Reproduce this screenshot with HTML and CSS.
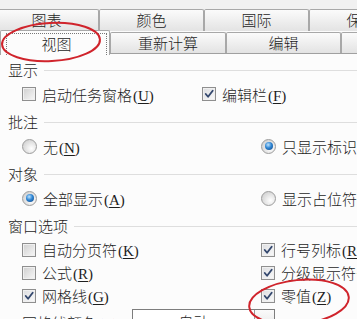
FILE: index.html
```html
<!DOCTYPE html>
<html lang="zh-CN">
<head>
<meta charset="utf-8">
<link rel="stylesheet" href="styles.css">
</head>
<body>
<div class="top"></div>
<div class="tabrow row1">
  <div class="tab">图表</div>
  <div class="tab">颜色</div>
  <div class="tab">国际</div>
  <div class="tab">保护</div>
</div>
<div class="tabrow row2">
  <div class="tab sel"><span class="focus">视图</span></div>
  <div class="tab w116">重新计算</div>
  <div class="tab w115">编辑</div>
  <div class="tab w115">错误检查</div>
</div>
<div class="panel">
  <div class="group">
    <div class="legend"><span>显示</span><i class="rule"></i></div>
    <div class="row g1">
      <label class="opt"><i class="cb"></i><span>启动任务窗格<span class="mn">(<u>U</u>)</span></span></label>
      <label class="opt"><i class="cb on"><svg viewBox="0 0 13 13"><path d="M3 6.5 L5.5 9.5 L10.5 3"/></svg></i><span>编辑栏<span class="mn">(<u>F</u>)</span></span></label>
    </div>
  </div>
  <div class="group">
    <div class="legend"><span>批注</span><i class="rule"></i></div>
    <div class="row g2">
      <label class="opt"><i class="rb"></i><span>无<span class="mn">(<u>N</u>)</span></span></label>
      <label class="opt"><i class="rb on"></i><span>只显示标识符<span class="mn">(<u>I</u>)</span></span></label>
    </div>
  </div>
  <div class="group">
    <div class="legend"><span>对象</span><i class="rule"></i></div>
    <div class="row g2">
      <label class="opt"><i class="rb on"></i><span>全部显示<span class="mn">(<u>A</u>)</span></span></label>
      <label class="opt"><i class="rb"></i><span>显示占位符<span class="mn">(<u>P</u>)</span></span></label>
    </div>
  </div>
  <div class="group">
    <div class="legend"><span>窗口选项</span><i class="rule"></i></div>
    <div class="row g2 tight">
      <label class="opt"><i class="cb"></i><span>自动分页符<span class="mn">(<u>K</u>)</span></span></label>
      <label class="opt"><i class="cb on"><svg viewBox="0 0 13 13"><path d="M3 6.5 L5.5 9.5 L10.5 3"/></svg></i><span>行号列标<span class="mn">(<u>R</u>)</span></span></label>
    </div>
    <div class="row g2 tight">
      <label class="opt"><i class="cb"></i><span>公式<span class="mn">(<u>R</u>)</span></span></label>
      <label class="opt"><i class="cb on"><svg viewBox="0 0 13 13"><path d="M3 6.5 L5.5 9.5 L10.5 3"/></svg></i><span>分级显示符号<span class="mn">(<u>O</u>)</span></span></label>
    </div>
    <div class="row g2 tight">
      <label class="opt"><i class="cb on"><svg viewBox="0 0 13 13"><path d="M3 6.5 L5.5 9.5 L10.5 3"/></svg></i><span>网格线<span class="mn">(<u>G</u>)</span></span></label>
      <label class="opt"><i class="cb on"><svg viewBox="0 0 13 13"><path d="M3 6.5 L5.5 9.5 L10.5 3"/></svg></i><span>零值<span class="mn">(<u>Z</u>)</span></span></label>
    </div>
    <div class="row colorrow">
      <span class="clabel">网格线颜色<span class="mn">(<u>C</u>):</span></span>
      <div class="dd"><span class="ddtext">自动</span><span class="ddbtn"></span></div>
    </div>
  </div>
</div>
<svg class="marks" viewBox="0 0 357 319" width="357" height="319">
  <ellipse cx="51" cy="42" rx="49" ry="19" transform="rotate(-3 51 42)"/>
  <ellipse cx="299" cy="302" rx="50" ry="22" transform="rotate(-6 299 302)"/>
</svg>
</body>
</html>
```
FILE: styles.css
```css
html, body {
  margin: 0;
  padding: 0;
}
body {
  width: 357px;
  height: 319px;
  overflow: hidden;
  position: relative;
  background: #fcfcfc;
  font-family: "Noto Sans CJK SC", "Liberation Sans", sans-serif;
  font-size: 15px;
  font-weight: 300;
  color: #1e1e1e;
}
.mn {
  font-family: "Liberation Serif", "Noto Sans CJK SC", serif;
  font-weight: 400;
  margin-left: 1px;
}
.top {
  height: 9px;
  background: #f1f1f1;
}
.tabrow {
  display: flex;
  height: 22px;
  position: relative;
  white-space: nowrap;
}
.row1 {
  margin-left: -6px;
}
.tab {
  flex: none;
  box-sizing: border-box;
  width: 105px;
  height: 22px;
  border: 1px solid #a8a8a8;
  border-bottom: none;
  border-radius: 2px 2px 0 0;
  background: linear-gradient(#fbfbfb, #e3e3e3);
  text-align: center;
  line-height: 20px;
  overflow: hidden;
}
.row2 .tab {
  margin-top: 1px;
  height: 21px;
  line-height: 20px;
}
.row2 .tab.w116 { width: 116px; }
.row2 .tab.w115 { width: 115px; }
.row2 .tab.sel {
  width: 110px;
  height: 25px;
  margin-top: -1px;
  background: #fcfcfc;
  position: relative;
  z-index: 2;
  display: flex;
  padding: 2px 2px 0 5px;
}
.focus {
  flex: 1;
  border: 1px dotted #777;
  border-bottom: none;
  line-height: 19px;
  text-align: center;
}
.panel {
  border-top: 1px solid #a0a0a0;
  padding-top: 4px;
}
.group {
  margin-bottom: 4px;
}
.legend {
  display: flex;
  align-items: center;
  height: 22px;
  padding-left: 8px;
  margin-bottom: 2px;
}
.rule {
  flex: 1;
  height: 1px;
  background: #dedede;
  margin-left: 6px;
  margin-top: 3px;
}
.row {
  display: grid;
  height: 24px;
  padding-left: 22px;
  align-items: center;
  white-space: nowrap;
}
.row.g1 { grid-template-columns: 180px 1fr; }
.row.g2 { grid-template-columns: 239px 1fr; }
.row.tight { height: 23px; }
.opt {
  display: flex;
  align-items: center;
  gap: 6px;
}
u {
  text-underline-offset: 2px;
  text-decoration-thickness: 1px;
}
.cb {
  flex: none;
  box-sizing: border-box;
  width: 14px;
  height: 14px;
  border: 1px solid #8f8f8f;
  background: linear-gradient(135deg, #cfcfcf, #f8f8f8);
  box-shadow: inset 0 0 0 1px #f0f0f0;
  display: block;
}
.cb.on {
  background: linear-gradient(135deg, #dcdde0, #fafafa);
}
.cb svg {
  display: block;
  width: 12px;
  height: 12px;
}
.cb path {
  fill: none;
  stroke: #34486e;
  stroke-width: 2;
  stroke-linecap: round;
  stroke-linejoin: round;
}
.rb {
  flex: none;
  box-sizing: border-box;
  width: 15px;
  height: 15px;
  border-radius: 50%;
  border: 1px solid #9c9c9c;
  background: radial-gradient(circle at 65% 65%, #ffffff, #d2d2d2 80%);
  display: flex;
  align-items: center;
  justify-content: center;
}
.rb.on::after {
  content: "";
  width: 8px;
  height: 8px;
  border-radius: 50%;
  background: radial-gradient(circle at 40% 35%, #bfe4ff, #2f86d4 45%, #0f3f7c 100%);
}
.colorrow {
  display: flex;
  align-items: flex-start;
  height: 24px;
}
.clabel {
  width: 110px;
  line-height: 24px;
  margin-top: 4px;
}
.dd {
  display: flex;
  box-sizing: border-box;
  width: 143px;
  height: 22px;
  margin-top: 2px;
  border: 1px solid #7d7d7d;
  background: #fff;
}
.ddtext {
  flex: 1;
  text-align: center;
  line-height: 24px;
}
.ddbtn {
  width: 19px;
  border-left: 1px solid #9a9a9a;
  background: linear-gradient(#fafafa, #e6e6e6);
}
.marks {
  position: absolute;
  left: 0;
  top: 0;
  z-index: 5;
  pointer-events: none;
}
.marks ellipse {
  fill: none;
  stroke: #d0242c;
  stroke-width: 2;
}
```
